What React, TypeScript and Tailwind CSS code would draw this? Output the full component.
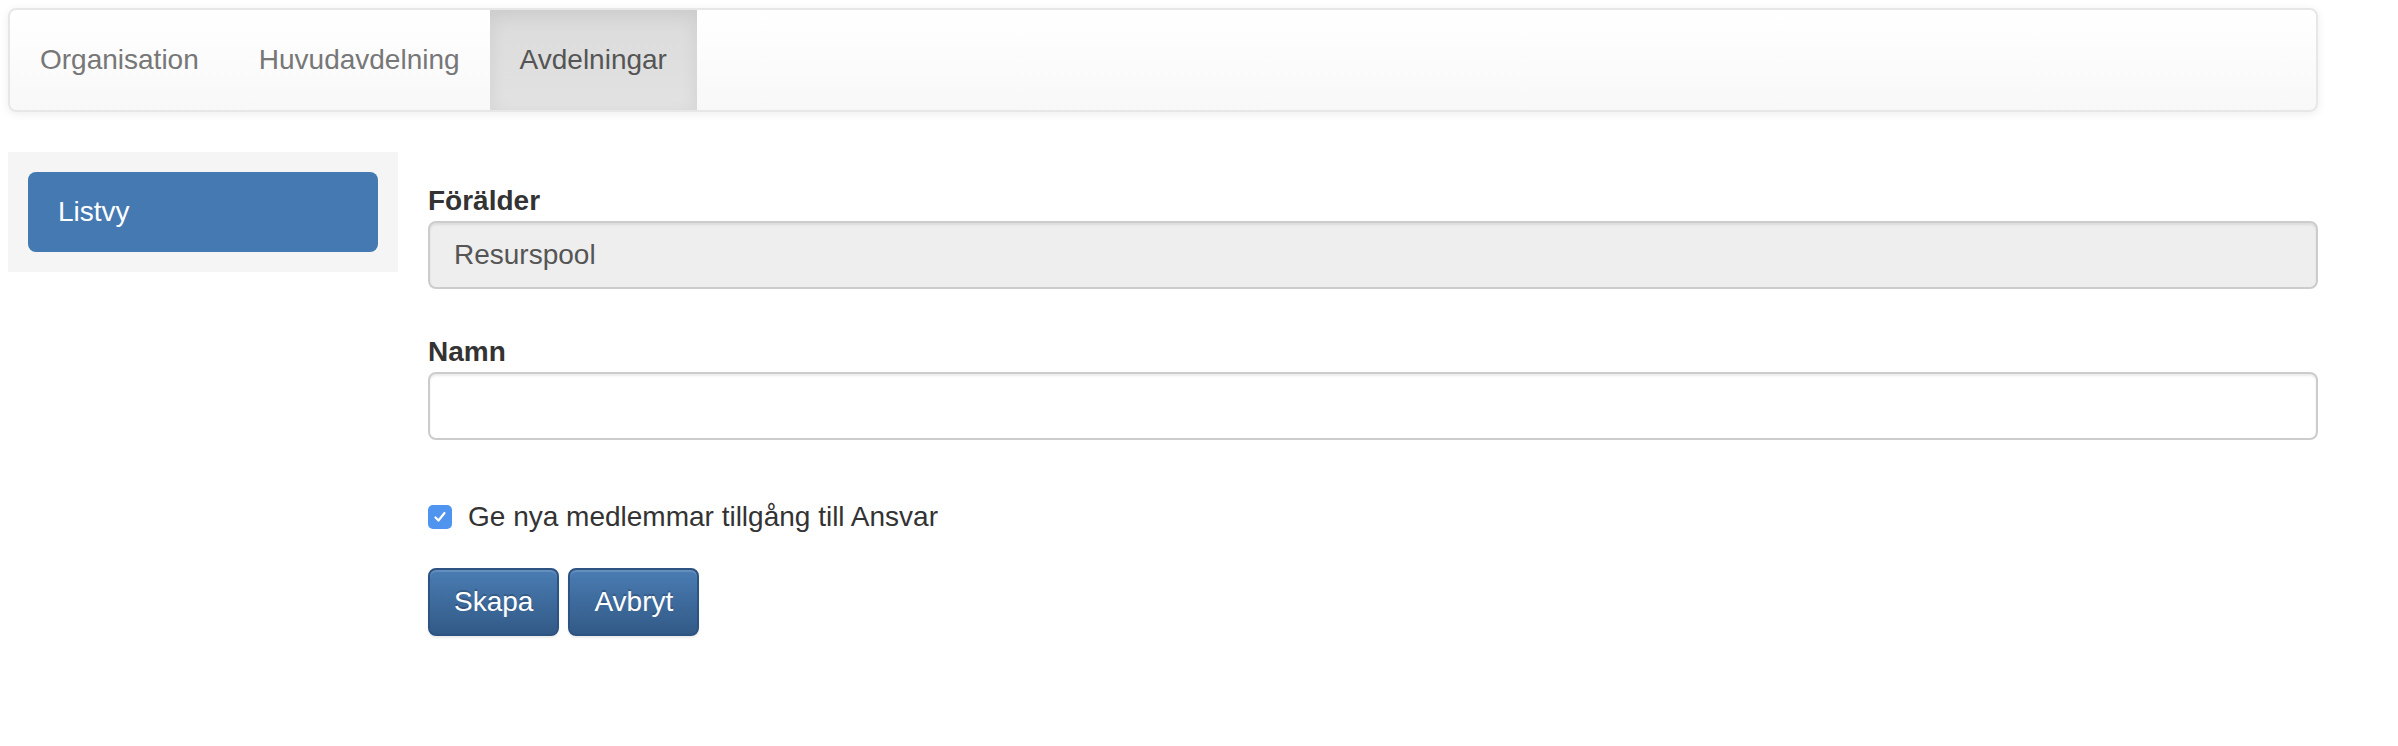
export default function App() {
  return (
    <div className="min-h-[746px] bg-white pt-[8px] pl-[8px] font-['Liberation_Sans','Helvetica_Neue',Arial,sans-serif] text-[28px] leading-[40px] text-[#333]">
      <nav className="flex h-[104px] w-[2310px] overflow-hidden rounded-[8px] border-2 border-[#e7e7e7] bg-linear-to-b from-white to-[#f8f8f8] shadow-[0_2px_10px_rgba(0,0,0,0.075)]">
        <span className="block px-[30px] py-[30px] text-[#777]">Organisation</span>
        <span className="block px-[30px] py-[30px] text-[#777]">Huvudavdelning</span>
        <span className="block bg-linear-to-b from-[#dbdbdb] to-[#e2e2e2] px-[30px] py-[30px] text-[#555] shadow-[inset_0_6px_18px_rgba(0,0,0,0.075)]">
          Avdelningar
        </span>
      </nav>

      <div className="mt-[40px] flex gap-[30px]">
        <div className="w-[390px] self-start bg-[#f5f5f5] p-[20px]">
          <div className="h-[80px] rounded-[8px] bg-[#4479b2] px-[30px] py-[20px] text-white">Listvy</div>
        </div>

        <div className="w-[1890px] pt-[29px]">
          <label className="block h-[40px] font-bold text-[#333]">Förälder</label>
          <div className="h-[68px] rounded-[8px] border-2 border-[#ccc] bg-[#eee] px-[24px] py-[12px] text-[#555] shadow-[inset_0_2px_2px_rgba(0,0,0,0.075)]">
            Resurspool
          </div>

          <label className="mt-[43px] block h-[40px] font-bold text-[#333]">Namn</label>
          <div className="h-[68px] rounded-[8px] border-2 border-[#ccc] bg-white px-[24px] py-[12px] shadow-[inset_0_2px_2px_rgba(0,0,0,0.075)]"></div>

          <div className="mt-[57px] flex h-[40px] items-center">
            <span className="flex h-[24px] w-[24px] items-center justify-center rounded-[5px] bg-[#4f95ef]">
              <svg width="16" height="16" viewBox="0 0 16 16" fill="none">
                <path d="M3.5 8.5 L6.5 11.5 L12.5 4" stroke="white" strokeWidth="2.2" strokeLinecap="round" strokeLinejoin="round" />
              </svg>
            </span>
            <span className="ml-[16px] text-[#333]">Ge nya medlemmar tillgång till Ansvar</span>
          </div>

          <div className="mt-[31px] flex gap-[9px]">
            <button className="h-[68px] rounded-[8px] border-2 border-[#2c5381] bg-linear-to-b from-[#4a7cb3] to-[#325a87] px-[24px] text-white [text-shadow:0_-2px_0_rgba(0,0,0,0.2)] shadow-[inset_0_2px_0_rgba(255,255,255,0.15),0_2px_2px_rgba(0,0,0,0.075)]">
              Skapa
            </button>
            <button className="h-[68px] rounded-[8px] border-2 border-[#2c5381] bg-linear-to-b from-[#4a7cb3] to-[#325a87] px-[24px] text-white [text-shadow:0_-2px_0_rgba(0,0,0,0.2)] shadow-[inset_0_2px_0_rgba(255,255,255,0.15),0_2px_2px_rgba(0,0,0,0.075)]">
              Avbryt
            </button>
          </div>
        </div>
      </div>
    </div>
  );
}
